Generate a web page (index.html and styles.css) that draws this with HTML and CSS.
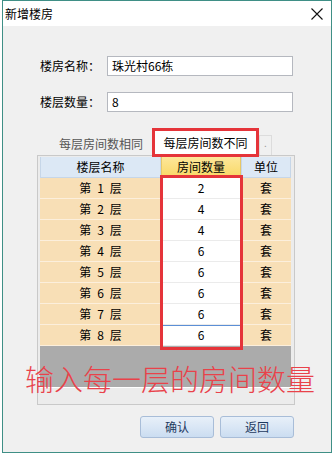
FILE: index.html
```html
<!DOCTYPE html>
<html>
<head>
<meta charset="utf-8" />
<title>新增楼房</title>
<link rel="stylesheet" href="styles.css">
</head>
<body>
	<div class="window">
		<div class="titlebar">
			<span class="title">新增楼房</span>
			<svg class="close" width="12" height="12" viewBox="0 0 12 12"><path d="M0.5 0.5L11.5 11.5M11.5 0.5L0.5 11.5" stroke="#111" stroke-width="1.1" fill="none"/></svg>
		</div>
		<div class="client">
			<div class="form">
				<div class="field">
					<span class="label">楼房名称：</span>
					<div class="input">珠光村66栋</div>
				</div>
				<div class="field">
					<span class="label">楼层数量：</span>
					<div class="input">8</div>
				</div>
			</div>
			<div class="tabs">
				<div class="tabstrip">
					<div class="tab">每层房间数相同</div>
					<div class="tab active">每层房间数不同</div>
					<div class="tab more">.</div>
				</div>
				<div class="tabpage">
					<div class="grid">
						<div class="grid_row grid_head">
							<div class="cell">楼层名称</div>
							<div class="cell edit">房间数量</div>
							<div class="cell">单位</div>
						</div>
						<div class="grid_row"><div class="cell">第&ensp;1&ensp;层</div><div class="cell edit">2</div><div class="cell">套</div></div>
						<div class="grid_row"><div class="cell">第&ensp;2&ensp;层</div><div class="cell edit">4</div><div class="cell">套</div></div>
						<div class="grid_row"><div class="cell">第&ensp;3&ensp;层</div><div class="cell edit">4</div><div class="cell">套</div></div>
						<div class="grid_row"><div class="cell">第&ensp;4&ensp;层</div><div class="cell edit">6</div><div class="cell">套</div></div>
						<div class="grid_row"><div class="cell">第&ensp;5&ensp;层</div><div class="cell edit">6</div><div class="cell">套</div></div>
						<div class="grid_row"><div class="cell">第&ensp;6&ensp;层</div><div class="cell edit">6</div><div class="cell">套</div></div>
						<div class="grid_row"><div class="cell">第&ensp;7&ensp;层</div><div class="cell edit">6</div><div class="cell">套</div></div>
						<div class="grid_row"><div class="cell">第&ensp;8&ensp;层</div><div class="cell edit current">6</div><div class="cell">套</div></div>
						<div class="grid_empty"></div>
					</div>
				</div>
			</div>
			<div class="buttons">
				<div class="btn">确认</div>
				<div class="btn">返回</div>
			</div>
			<div class="mark_box"></div>
			<div class="note">输入每一层的房间数量</div>
		</div>
	</div>
</body>
</html>
```

FILE: styles.css
```css
*{ padding:0; margin:0; box-sizing:border-box; }
body{ background:#fff; font-family:"Noto Sans CJK SC", sans-serif; font-size:12px; color:#000; }

.window{ margin-left:2px; width:330px; height:453px; border:1px solid #3f8f86; display:flex; flex-direction:column; }
.titlebar{ flex:none; height:25px; background:#fff; display:flex; align-items:center; justify-content:space-between; padding:0 8px 0 2px; }
.title{ font-size:12px; line-height:14px; color:#000; }
.close{ display:block; margin-top:1px; }

.client{ flex:1; background:#f0f0f0; position:relative; padding:30px 37px 0 37px; }

.form{ display:flex; flex-direction:column; gap:16px; }
.field{ display:grid; grid-template-columns:67px 186px; align-items:center; }
.label{ line-height:20px; }
.input{ height:20px; border:1px solid #b5b8bf; background:#fff; padding-left:4px; line-height:18px; }

.tabs{ margin:16px 0 0 -3px; }
.tabstrip{ height:27px; display:flex; align-items:flex-end; padding-left:13px; }
.tab{ width:102px; height:23px; line-height:23px; text-align:center; color:#555; }
.tab.active{ width:107px; height:29px; line-height:23px; border:3px solid #e5343a; background:#fff; color:#000; margin-bottom:-2px; position:relative; z-index:1; }
.tab.more{ width:13px; height:20px; line-height:14px; border:1px solid #dcdcdc; border-bottom:none; color:#999; font-size:10px; }

.tabpage{ width:258px; border:1px solid #c9c9c9; background:#ececec; padding:1px 3px 16px 2px; }
.grid{ width:251px; border-bottom:1px solid #fff; }
.grid_row{ display:grid; grid-template-columns:121px 80px 50px; height:21px; }
.cell{ text-align:center; line-height:20px; background:#f8dfb6; border-bottom:1px solid #fcefdc; }
.cell.edit{ background:#fff; border-bottom-color:#ebebeb; }
.cell.current{ border-top:1px solid #5b8fd6; line-height:18px; }
.grid_head .cell{ background:#dce8f5; border:1px solid #c6d6e8; border-top:none; line-height:20px; }
.grid_head .cell.edit{ background:linear-gradient(#fde79a, #f9d866); border-color:#e8c766; }
.grid_empty{ height:41px; background:#ababab; }

.buttons{ display:flex; justify-content:flex-end; gap:6px; margin-top:11px; }
.btn{ width:74px; height:22px; line-height:20px; text-align:center; border:1px solid #a8bdd8; border-radius:3px; background:linear-gradient(#e8f0f9, #cbddf1); color:#1e3a5f; }

.mark_box{ position:absolute; left:157px; top:149px; width:83px; height:175px; border:3px solid #e5343a; pointer-events:none; }
.note{ position:absolute; left:22px; top:336px; font-size:29px; line-height:32px; font-weight:300; color:#e9424a; white-space:nowrap; pointer-events:none; }
```
